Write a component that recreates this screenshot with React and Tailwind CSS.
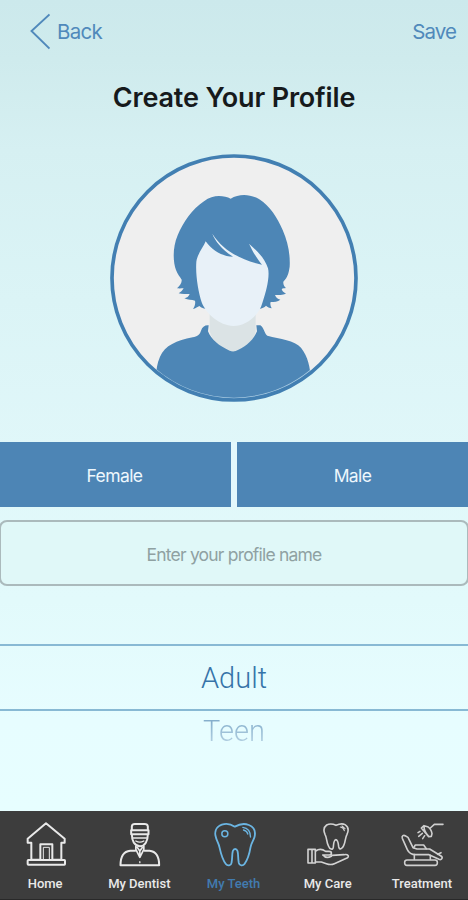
import { useState } from "react";

function AvatarIcon() {
  return (
    <svg viewBox="30 28 744 744" className="h-[248px] w-[248px]">
      <defs>
        <clipPath id="avatar-clip">
          <circle cx="402" cy="400" r="366" />
        </clipPath>
      </defs>
      <circle cx="402" cy="400" r="366" fill="#efefef" />
      <g clipPath="url(#avatar-clip)">
        <path
          d="M392 162C372 153 340 148 312 170C276 194 250 232 233 272C217 310 219 352 228 376C233 390 240 396 245 405C246 413 241 422 231 431C239 432 246 431 251 431C247 438 242 443 236 446C246 449 259 447 269 448C267 455 260 460 253 461C264 467 275 465 285 468C287 477 284 486 279 493C287 491 293 487 298 484C303 489 308 491 321 493L400 500L477 493C487 491 493 488 498 483C503 487 508 490 515 491C511 484 510 477 512 472C523 472 533 471 541 465C533 463 527 458 525 451C536 451 548 451 558 447C550 443 546 438 545 433C549 431 553 431 558 430C553 426 549 419 550 411C563 398 566 385 569 366C571 330 564 292 548 256C532 220 510 184 478 164C447 146 416 148 392 162Z"
          fill="#4d86b6"
        />
        <path d="M329 502L467 502L467 560Q458 604 398 624Q340 604 329 560Z" fill="#dbe3e5" />
        <path
          d="M317 290C311 307 293 325 289 351C286 391 295 441 305 473C318 507 358 543 400 544C440 544 478 510 487 475C499 440 510 396 504 371C493 337 470 319 447 297C456 316 470 342 486 360C426 347 372 321 337 267C345 289 367 316 399 336C365 335 337 318 317 290Z"
          fill="#e8f1f8"
        />
        <path
          d="M326 542C314 541 307 547 303 558C299 571 292 575 278 578C230 588 195 602 180 636C171 655 169 676 168 700L220 790L590 790L632 700C631 671 624 635 603 609C584 587 540 583 502 573C493 567 492 549 481 542L469 542L471 560C460 588 431 611 407 619Q398 622 389 618C358 605 333 584 324 560Z"
          fill="#4d86b6"
        />
      </g>
      <path d="M166 674Q268 760 402 761Q532 759 632 677" fill="none" stroke="#a9cbe2" strokeWidth="4" />
      <circle cx="402" cy="400" r="366" fill="none" stroke="#427fb2" strokeWidth="11" />
    </svg>
  );
}

function HomeIcon() {
  return (
    <svg
      viewBox="69 48 132 138"
      className="h-[46px] w-[44px]"
      fill="none"
      stroke="currentColor"
      strokeWidth="6"
      strokeLinejoin="round"
    >
      <path d="M138 55L83 101V113H94V164H121V118H157V164H184V113H194V101Z" />
      <path d="M130 164V127H148V164" strokeWidth="3" />
      <rect x="83" y="165" width="112" height="14" rx="2" />
    </svg>
  );
}

function DentistIcon() {
  return (
    <svg
      viewBox="352.5 48 132 138"
      className="h-[46px] w-[44px]"
      fill="none"
      stroke="currentColor"
      strokeWidth="6"
      strokeLinejoin="round"
      strokeLinecap="round"
    >
      <path d="M397 76V64Q398 57 406 57H435Q444 57 445 64V76Z" />
      <path d="M395 76V88H447V76M397 88Q397 104 403 113Q411 124 421 124Q432 124 439 113Q445 104 445 88" />
      <path d="M401 99H441M409 108Q421 115 433 108" strokeWidth="4" />
      <path d="M409 123V133L421 157L433 133V123M413 127L421 138L429 127M421 138V155" strokeWidth="5" />
      <path d="M407 137H392C370 139 363 156 363 181H479C479 156 472 139 450 137H435" />
      <path d="M421 170V173" strokeWidth="4" />
    </svg>
  );
}

function TeethIcon() {
  return (
    <svg
      viewBox="184.5 48 132 138"
      className="h-[46px] w-[44px]"
      fill="none"
      stroke="#6bb5e2"
      strokeWidth="5.5"
      strokeLinejoin="round"
      strokeLinecap="round"
    >
      <path d="M253 65C241 57 228 54 214 59C197 65 191 80 196 96C198 107 205 115 207 127C211 145 216 164 226 177C231 184 242 182 243 174C246 160 244 149 247 138C250 130 258 130 261 138C264 149 262 160 265 174C267 182 277 184 282 177C292 163 297 145 300 127C302 115 309 107 312 96C316 80 310 66 295 60C280 54 267 57 253 65Z" />
      <circle cx="223" cy="86" r="9" strokeWidth="4.5" />
      <path d="M277 67C292 69 300 79 300 96M279 75Q290 78 292 87" strokeWidth="4" />
    </svg>
  );
}

function CareIcon() {
  return (
    <svg
      viewBox="48 48 132 138"
      className="h-[46px] w-[44px]"
      fill="none"
      stroke="#d3d3d3"
      strokeWidth="4.8"
      strokeLinejoin="round"
      strokeLinecap="round"
    >
      <path d="M138 61C128 56 119 55 110 60C100 67 101 79 105 88C111 98 109 111 115 122C119 133 129 137 130 126C131 115 131 105 137 104C143 104 145 114 146 125C148 136 157 132 161 122C167 110 165 99 171 88C176 77 175 65 165 59C156 54 147 57 138 61Z" />
      <path d="M151 66Q160 67 163 77M156 63L165 71" strokeWidth="3.5" />
      <path d="M54 133H76V174H54ZM66 134V173" />
      <path d="M77 138C87 131 96 131 107 139H117C126 139 127 149 118 150H98M126 151L162 149C175 147 179 154 171 159L133 176C125 180 117 179 109 176L94 171H77M99 150C104 157 114 159 124 154" />
    </svg>
  );
}

function TreatmentIcon() {
  return (
    <svg
      viewBox="330 48 132 138"
      className="h-[46px] w-[44px]"
      fill="none"
      stroke="#cfcfcf"
      strokeWidth="4.8"
      strokeLinejoin="round"
      strokeLinecap="round"
    >
      <path d="M459 58H433L421 69M394 69L402 62L413 65Q424 72 426 86L424 94L416 95ZM402 63Q402 80 416 94" />
      <path d="M390 79L384 83M397 85L386 94M404 92L398 101" strokeWidth="4.5" />
      <path d="M337 100C334 92 341 89 347 93L354 97L369 128L381 132H419L453 153C460 158 455 166 447 163L417 149H377C363 149 356 143 352 134Z" />
      <path d="M371 128L376 120H401L409 131M373 149V163M421 151V163M443 148L453 143" />
      <rect x="344" y="165" width="98" height="16" rx="7" />
    </svg>
  );
}

const tabs = [
  { id: "home", label: "Home", icon: HomeIcon },
  { id: "dentist", label: "My Dentist", icon: DentistIcon },
  { id: "teeth", label: "My Teeth", icon: TeethIcon },
  { id: "care", label: "My Care", icon: CareIcon },
  { id: "treatment", label: "Treatment", icon: TreatmentIcon },
];

export default function App() {
  const [name, setName] = useState("");
  const [activeTab, setActiveTab] = useState("teeth");

  return (
    <div className="flex h-[900px] w-[468px] flex-col overflow-hidden bg-[linear-gradient(180deg,#cce9ec_0px,#cfebed_60px,#d6f0f2_150px,#dbf4f6_300px,#e0f7f9_450px,#e2fafb_600px,#e7fdff_720px,#e7feff_810px)] font-['Inter','Liberation_Sans',sans-serif]">
      <header className="flex h-16 shrink-0 items-center justify-between pl-[30px] pr-3 text-[#5089bb]">
        <button type="button" className="flex items-center gap-[7px]">
          <svg viewBox="0 0 20 38" className="h-[38px] w-5" fill="none" stroke="currentColor" strokeWidth="1.9">
            <path d="M19.5 1.5L1.5 18L19.5 35.5" />
          </svg>
          <span className="text-[20.5px] tracking-[-0.7px]">Back</span>
        </button>
        <button type="button" className="pt-px text-[20.5px] tracking-[-0.9px]">
          Save
        </button>
      </header>

      <h1 className="mt-[14px] text-center text-[27px] leading-10 font-semibold tracking-[-0.17px] text-[#161a1c]">
        Create Your Profile
      </h1>

      <div className="mt-[36px] flex justify-center">
        <AvatarIcon />
      </div>

      <div className="mt-10 grid h-[65px] shrink-0 grid-cols-2 gap-[6px] bg-[#e3f8fc] text-[17.5px] tracking-[-0.6px] text-[#edf7fd]">
        <button type="button" className="bg-[#4d85b5] pr-0.5 pt-1">
          Female
        </button>
        <button type="button" className="bg-[#4d85b5] pt-1">
          Male
        </button>
      </div>

      <input
        value={name}
        onChange={(e) => setName(e.target.value)}
        placeholder="Enter your profile name"
        className="mt-[13px] -ml-px h-[66px] w-[470px] shrink-0 rounded-lg border-2 border-[#abbabc] bg-[#e0f8f8] pt-0.5 text-center text-[17.5px] tracking-[-0.8px] outline-none placeholder:text-[#8fa1a2]"
      />

      <div className="mt-[58px] flex flex-col items-center font-['Roboto',sans-serif] text-[29px]">
        <div className="flex h-[67px] w-full items-center justify-center border-y-2 border-[#88b9d4] pt-0.5 font-light text-[#3674a9]">
          Adult
        </div>
        <div className="bg-linear-to-b from-[#83adcb] from-20% to-[#bbd6e5] to-90% bg-clip-text leading-10 font-light text-transparent">
          Teen
        </div>
      </div>

      <nav className="mt-auto flex h-[89px] w-[471px] shrink-0 -ml-[2px] border-b border-[#292929] bg-[#3d3d3d] pt-[10px] font-['Roboto',sans-serif]">
        {tabs.map(({ id, label, icon: Icon }) => (
          <button
            key={id}
            type="button"
            onClick={() => setActiveTab(id)}
            className={`flex flex-1 flex-col items-center gap-[9px] text-[13px] leading-4 font-medium whitespace-nowrap ${
              activeTab === id ? "text-[#427baf]" : "text-[#e9e9e9]"
            }`}
          >
            <Icon />
            {label}
          </button>
        ))}
      </nav>
    </div>
  );
}
